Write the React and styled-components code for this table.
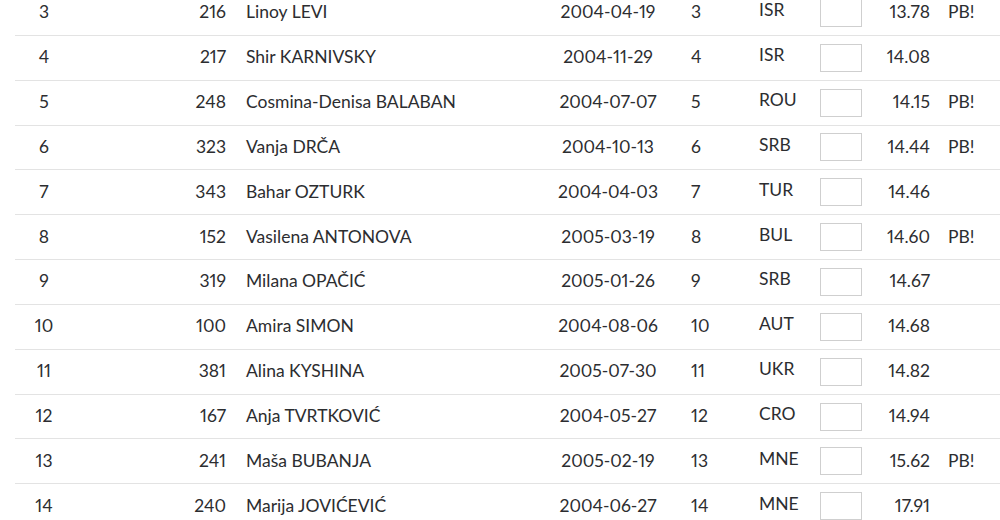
import React from "react";
import styled, { createGlobalStyle } from "styled-components";

const rows = [
  { place: 3, bib: 216, name: "Linoy LEVI", dob: "2004-04-19", lane: 3, nat: "ISR", result: "13.78", pb: true },
  { place: 4, bib: 217, name: "Shir KARNIVSKY", dob: "2004-11-29", lane: 4, nat: "ISR", result: "14.08", pb: false },
  { place: 5, bib: 248, name: "Cosmina-Denisa BALABAN", dob: "2004-07-07", lane: 5, nat: "ROU", result: "14.15", pb: true },
  { place: 6, bib: 323, name: "Vanja DRČA", dob: "2004-10-13", lane: 6, nat: "SRB", result: "14.44", pb: true },
  { place: 7, bib: 343, name: "Bahar OZTURK", dob: "2004-04-03", lane: 7, nat: "TUR", result: "14.46", pb: false },
  { place: 8, bib: 152, name: "Vasilena ANTONOVA", dob: "2005-03-19", lane: 8, nat: "BUL", result: "14.60", pb: true },
  { place: 9, bib: 319, name: "Milana OPAČIĆ", dob: "2005-01-26", lane: 9, nat: "SRB", result: "14.67", pb: false },
  { place: 10, bib: 100, name: "Amira SIMON", dob: "2004-08-06", lane: 10, nat: "AUT", result: "14.68", pb: false },
  { place: 11, bib: 381, name: "Alina KYSHINA", dob: "2005-07-30", lane: 11, nat: "UKR", result: "14.82", pb: false },
  { place: 12, bib: 167, name: "Anja TVRTKOVIĆ", dob: "2004-05-27", lane: 12, nat: "CRO", result: "14.94", pb: false },
  { place: 13, bib: 241, name: "Maša BUBANJA", dob: "2005-02-19", lane: 13, nat: "MNE", result: "15.62", pb: true },
  { place: 14, bib: 240, name: "Marija JOVIĆEVIĆ", dob: "2004-06-27", lane: 14, nat: "MNE", result: "17.91", pb: false },
];

const GlobalStyle = createGlobalStyle`
  html, body {
    margin: 0;
    padding: 0;
    background: #fff;
    overflow: hidden;
  }
  body {
    font-family: Lato, "Open Sans", sans-serif;
    color: #2c2d30;
  }
`;

function App() {
  return (
    <>
      <GlobalStyle />
      <Results>
        {rows.map((r) => (
          <Row key={r.place}>
            <Place>{r.place}</Place>
            <Bib>{r.bib}</Bib>
            <Name>{r.name}</Name>
            <Dob>{r.dob}</Dob>
            <Lane>{r.lane}</Lane>
            <Nat>{r.nat}</Nat>
            <BoxCell>
              <Box />
            </BoxCell>
            <Result>{r.result}</Result>
            <Pb>{r.pb ? "PB!" : ""}</Pb>
          </Row>
        ))}
      </Results>
    </>
  );
}

export default App;

const Results = styled.div`
  margin-top: -9px;
  margin-left: 15px;
`;

const Row = styled.div`
  display: grid;
  grid-template-columns: 58px 163px 294px 156px 73px 61px 42px 78px 60px;
  align-items: center;
  height: 44.85px;
  box-sizing: border-box;
  border-bottom: 1px solid #e3e3e3;
  font-size: 17.5px;
  font-variant-numeric: proportional-nums;
`;

const Cell = styled.div`
  white-space: nowrap;
  padding-bottom: 2px;
`;

const Place = styled(Cell)`
  text-align: center;
`;

const Bib = styled(Cell)`
  text-align: right;
  padding-right: 10px;
`;

const Name = styled(Cell)`
  padding-left: 10px;
`;

const Dob = styled(Cell)`
  text-align: center;
`;

const Lane = styled(Cell)`
  padding-left: 5px;
`;

const Nat = styled(Cell)`
  padding-bottom: 6px;
`;

const BoxCell = styled.div`
  display: flex;
  align-items: center;
`;

const Box = styled.div`
  width: 42px;
  height: 28px;
  box-sizing: border-box;
  border: 1px solid #cfcfcf;
  background: #fff;
`;

const Result = styled(Cell)`
  text-align: right;
  padding-right: 10px;
`;

const Pb = styled(Cell)`
  padding-left: 8px;
`;
